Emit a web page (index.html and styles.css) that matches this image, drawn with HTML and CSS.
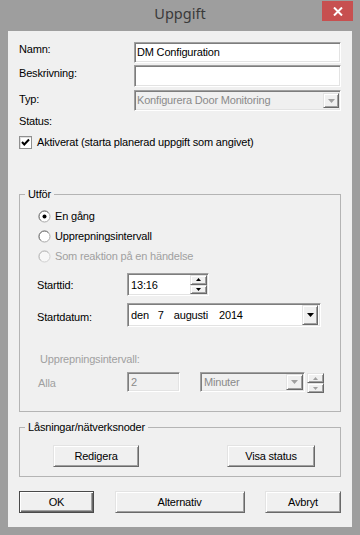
FILE: index.html
```html
<!DOCTYPE html>
<html lang="sv">
<head>
<meta charset="utf-8">
<title>Uppgift</title>
<link rel="stylesheet" href="styles.css">
</head>
<body>
<div class="window">
  <div class="titlebar">
    <span class="tb-spacer"></span>
    <span class="title">Uppgift</span>
    <span class="close"><svg width="10" height="9" viewBox="0 0 10 9"><path d="M1 0.5 L9 8.5 M9 0.5 L1 8.5" stroke="#fff" stroke-width="2" fill="none"/></svg></span>
  </div>
  <div class="client">
    <div class="row r1"><span class="lbl">Namn:</span><div class="edit sunken">DM Configuration</div></div>
    <div class="row r2"><span class="lbl">Beskrivning:</span><div class="edit sunken tall"></div></div>
    <div class="row r3"><span class="lbl">Typ:</span>
      <div class="combo typ sunken"><span class="combo-text dim">Konfigurera Door Monitoring</span>
        <span class="dd raised"><svg width="7" height="4" viewBox="0 0 7 4"><path d="M0 0 H7 L3.5 4 Z" fill="#a0a0a0"/></svg></span>
      </div>
    </div>
    <div class="status">Status:</div>
    <div class="check-row">
      <span class="checkbox"><svg width="11" height="11" viewBox="0 0 11 11"><path d="M2 5 L4.3 7.5 L9 2.5" stroke="#000" stroke-width="2" fill="none"/></svg></span>
      <span>Aktiverat (starta planerad uppgift som angivet)</span>
    </div>

    <fieldset class="group utfor">
      <legend>Utför</legend>
      <div class="group-body">
        <div class="radio-row">
          <svg class="radio" width="13" height="13" viewBox="0 0 13 13"><circle cx="6.5" cy="6.5" r="5.5" fill="#fff" stroke="#a8a8a8"/><path d="M2.6 10.4 A5.5 5.5 0 0 1 10.4 2.6" fill="none" stroke="#7a7a7a"/><circle cx="6.5" cy="6.5" r="2" fill="#000"/></svg>
          <span>En gång</span>
        </div>
        <div class="radio-row">
          <svg class="radio" width="13" height="13" viewBox="0 0 13 13"><circle cx="6.5" cy="6.5" r="5.5" fill="#fff" stroke="#a8a8a8"/><path d="M2.6 10.4 A5.5 5.5 0 0 1 10.4 2.6" fill="none" stroke="#7a7a7a"/></svg>
          <span>Upprepningsintervall</span>
        </div>
        <div class="radio-row off">
          <svg class="radio" width="13" height="13" viewBox="0 0 13 13"><circle cx="6.5" cy="6.5" r="5.5" fill="#f7f7f7" stroke="#d0d0d0"/><path d="M2.6 10.4 A5.5 5.5 0 0 1 10.4 2.6" fill="none" stroke="#bdbdbd"/></svg>
          <span>Som reaktion på en händelse</span>
        </div>

        <div class="prow starttid">
          <span class="plbl">Starttid:</span>
          <div class="timebox sunken">
            <span class="val">13:16</span>
            <span class="spin">
              <span class="spin-btn raised"><svg width="5" height="3" viewBox="0 0 5 3"><path d="M0 3 H5 L2.5 0 Z" fill="#000"/></svg></span>
              <span class="spin-btn raised"><svg width="5" height="3" viewBox="0 0 5 3"><path d="M0 0 H5 L2.5 3 Z" fill="#000"/></svg></span>
            </span>
          </div>
        </div>

        <div class="prow startdatum">
          <span class="plbl">Startdatum:</span>
          <div class="datebox sunken">
            <span class="date"><span>den</span><span class="d-day">7</span><span class="d-month">augusti</span><span class="d-year">2014</span></span>
            <span class="dd raised"><svg width="7" height="4" viewBox="0 0 7 4"><path d="M0 0 H7 L3.5 4 Z" fill="#000"/></svg></span>
          </div>
        </div>

        <div class="rep-label dim-label">Upprepningsintervall:</div>
        <div class="prow alla">
          <span class="plbl dim-label">Alla</span>
          <div class="num sunken dim">2</div>
          <div class="combo minuter sunken"><span class="combo-text dim">Minuter</span>
            <span class="dd raised"><svg width="7" height="4" viewBox="0 0 7 4"><path d="M0 0 H7 L3.5 4 Z" fill="#a0a0a0"/></svg></span>
          </div>
          <span class="spin outer">
            <span class="spin-btn raised"><svg width="5" height="3" viewBox="0 0 5 3"><path d="M0 3 H5 L2.5 0 Z" fill="#a0a0a0"/></svg></span>
            <span class="spin-btn raised"><svg width="5" height="3" viewBox="0 0 5 3"><path d="M0 0 H5 L2.5 3 Z" fill="#a0a0a0"/></svg></span>
          </span>
        </div>
      </div>
    </fieldset>

    <fieldset class="group locks">
      <legend>Låsningar/nätverksnoder</legend>
      <div class="lock-buttons">
        <button class="btn redigera">Redigera</button>
        <button class="btn visa">Visa status</button>
      </div>
    </fieldset>

    <div class="dialog-buttons">
      <button class="btn ok default">OK</button>
      <button class="btn alt">Alternativ</button>
      <button class="btn cancel">Avbryt</button>
    </div>
  </div>
</div>
</body>
</html>
```
FILE: styles.css
```css
* { box-sizing: border-box; }

body {
  margin: 0;
  font-family: "Liberation Sans", Arial, sans-serif;
  font-size: 11px;
  line-height: 14px;
  letter-spacing: -0.18px;
  color: #000;
}

.window {
  width: 360px;
  height: 535px;
  background: #9e9e9e;
  display: flex;
  flex-direction: column;
}

.titlebar {
  height: 31px;
  display: grid;
  grid-template-columns: 1fr auto 1fr;
  align-items: start;
}

.title {
  font-family: "Noto Sans", "Liberation Sans", sans-serif;
  font-size: 14.5px;
  line-height: 20px;
  letter-spacing: 0;
  margin-top: 3px;
  color: #3a3a3a;
}

.close {
  justify-self: end;
  width: 31px;
  height: 20px;
  margin: 1px 7px 0 0;
  background: #c75050;
  display: flex;
  align-items: center;
  justify-content: center;
}

.client {
  margin: 0 8px;
  height: 496px;
  background: #f0f0f0;
  padding: 11px 11px 0;
}

/* 3D edges */
.sunken {
  border: 1px solid;
  border-color: #a0a0a0 #fff #fff #a0a0a0;
  box-shadow: inset 1px 1px 0 #7d7d7d, inset -1px -1px 0 #e3e3e3;
  background: #fff;
}

.raised {
  border: 1px solid;
  border-color: #e3e3e3 #696969 #696969 #e3e3e3;
  box-shadow: inset 1px 1px 0 #fff, inset -1px -1px 0 #a0a0a0;
  background: #f0f0f0;
  display: flex;
  align-items: center;
  justify-content: center;
}

.dim { color: #8a8a8a; }
.dim-label { color: #a0a0a0; }

/* top form */
.row { display: flex; align-items: flex-start; }
.lbl { width: 115px; flex: none; }
.r1 { margin-bottom: 2px; }
.r2 { margin-bottom: 3px; }
.r2 .lbl { padding-top: 1px; }
.r3 .lbl { padding-top: 2px; }

.edit {
  flex: 1;
  height: 21px;
  padding: 2px 2px;
}
.edit.tall { height: 22px; }

.combo {
  display: flex;
  align-items: stretch;
  background: #f0f0f0;
}
.combo .combo-text { flex: 1; padding: 2px 2px; white-space: nowrap; overflow: hidden; }
.combo.typ { flex: 1; height: 21px; }
.combo.typ .combo-text { padding: 2px 2px; }
.combo .dd { width: 16px; margin: 2px 1px 2px 0; }

.status { margin-top: 3px; }

.check-row {
  display: flex;
  align-items: flex-start;
  margin-top: 7px;
}
.checkbox {
  width: 13px;
  height: 13px;
  margin: 1px 5px 0 0;
  border: 1px solid #8f8f8f;
  background: #fff;
  box-shadow: inset 1px 1px 0 #e0e0e0;
  display: flex;
  align-items: center;
  justify-content: center;
}

/* group boxes */
.group {
  margin: 0;
  padding: 0;
  min-width: 0;
  border: 1px solid #b4b4b4;
}
.group legend {
  margin-left: 5px;
  padding: 0 3px;
  line-height: 15px;
}
.utfor { margin-top: 38px; }
.group-body { padding: 4px 10px 18px 17px; }

.radio-row {
  height: 20px;
  display: flex;
  align-items: center;
  gap: 4px;
  padding-left: 1px;
}
.radio-row.off { color: #a0a0a0; }
.radio { flex: none; }

.prow { display: flex; align-items: flex-start; }
.plbl { width: 90px; flex: none; }

.starttid { margin-top: 7px; }
.starttid .plbl { align-self: center; }
.timebox {
  width: 82px;
  height: 23px;
  display: flex;
  align-items: center;
  padding: 1px 1px 1px 3px;
}
.timebox .val { flex: 1; }
.spin {
  width: 17px;
  display: flex;
  flex-direction: column;
  align-self: stretch;
}
.spin .spin-btn { flex: 1; }

.startdatum { margin-top: 7px; }
.startdatum .plbl { margin-top: 7px; }
.datebox {
  width: 194px;
  height: 24px;
  display: flex;
  align-items: center;
  padding: 1px 2px 1px 3px;
}
.date { flex: 1; display: flex; }
.d-day { margin-left: 9px; }
.d-month { margin-left: 10px; }
.d-year { margin-left: 11px; }
.datebox .dd { width: 16px; height: 20px; }

.rep-label { margin-top: 25px; padding-left: 3px; }
.alla { margin-top: 6px; }
.alla .plbl { margin-top: 4px; padding-left: 1px; }
.num {
  width: 53px;
  height: 20px;
  padding: 2px 3px;
  background: #f0f0f0;
}
.combo.minuter {
  width: 105px;
  height: 20px;
  margin-left: 20px;
}
.combo.minuter .combo-text { padding: 2px 3px; }
.combo.minuter .dd { width: 17px; margin: 1px 1px 1px 0; }
.spin.outer {
  height: 20px;
  margin: 1px 0 0 2px;
  align-self: flex-start;
}

.locks { margin-top: 8px; }
.lock-buttons {
  display: flex;
  padding: 10px 0 9px 33px;
  gap: 88px;
}

/* buttons */
.btn {
  font: inherit;
  letter-spacing: inherit;
  color: #000;
  height: 22px;
  padding: 0;
  border: 1px solid;
  border-color: #e3e3e3 #696969 #696969 #e3e3e3;
  box-shadow: inset 1px 1px 0 #fff, inset -1px -1px 0 #a0a0a0;
  background: #f0f0f0;
}
.btn.default {
  border-color: #4a4a4a;
  box-shadow: inset 1px 1px 0 #fff, inset -1px -1px 0 #696969, inset -2px -2px 0 #a0a0a0;
}
.redigera { width: 86px; }
.visa { width: 88px; }

.dialog-buttons {
  margin-top: 14px;
  display: flex;
  justify-content: space-between;
}
.ok { width: 75px; }
.alt { width: 130px; }
.cancel { width: 76px; }
```
